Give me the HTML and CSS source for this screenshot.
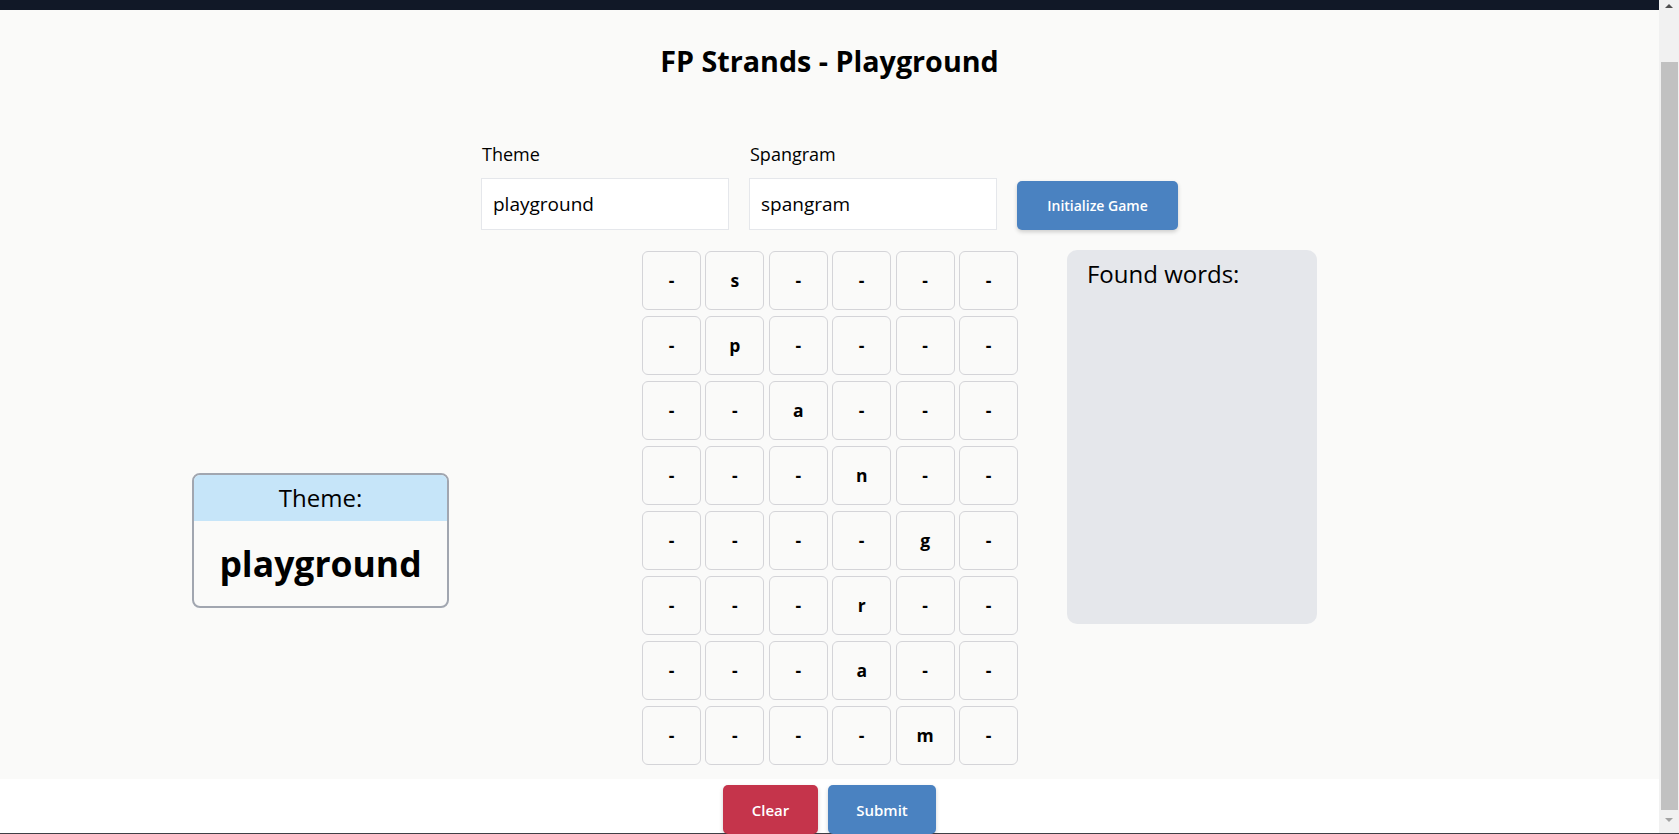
FILE: index.html
```html
<!DOCTYPE html>
<html lang="en">
<head>
<meta charset="utf-8">
<title>FP Strands - Playground</title>
<link rel="stylesheet" href="styles.css">
</head>
<body>
<div class="window">
  <div class="page">
    <div class="topbar"></div>
    <main class="content">
      <h1 class="title">FP Strands - Playground</h1>
      <form class="setup">
        <label class="field">
          <span class="field-label">Theme</span>
          <input class="field-input" type="text" value="playground">
        </label>
        <label class="field">
          <span class="field-label">Spangram</span>
          <input class="field-input" type="text" value="spangram">
        </label>
        <button class="btn btn-blue btn-init" type="button">Initialize Game</button>
      </form>
      <section class="board">
        <div class="theme-card">
          <div class="theme-card-head">Theme:</div>
          <div class="theme-card-body">playground</div>
        </div>
        <div class="letters">
          <div class="cell">-</div><div class="cell">s</div><div class="cell">-</div><div class="cell">-</div><div class="cell">-</div><div class="cell">-</div>
          <div class="cell">-</div><div class="cell">p</div><div class="cell">-</div><div class="cell">-</div><div class="cell">-</div><div class="cell">-</div>
          <div class="cell">-</div><div class="cell">-</div><div class="cell">a</div><div class="cell">-</div><div class="cell">-</div><div class="cell">-</div>
          <div class="cell">-</div><div class="cell">-</div><div class="cell">-</div><div class="cell">n</div><div class="cell">-</div><div class="cell">-</div>
          <div class="cell">-</div><div class="cell">-</div><div class="cell">-</div><div class="cell">-</div><div class="cell">g</div><div class="cell">-</div>
          <div class="cell">-</div><div class="cell">-</div><div class="cell">-</div><div class="cell">r</div><div class="cell">-</div><div class="cell">-</div>
          <div class="cell">-</div><div class="cell">-</div><div class="cell">-</div><div class="cell">a</div><div class="cell">-</div><div class="cell">-</div>
          <div class="cell">-</div><div class="cell">-</div><div class="cell">-</div><div class="cell">-</div><div class="cell">m</div><div class="cell">-</div>
        </div>
        <aside class="found">
          <h2 class="found-title">Found words:</h2>
        </aside>
      </section>
    </main>
    <footer class="actions">
      <button class="btn btn-red btn-clear" type="button">Clear</button>
      <button class="btn btn-blue btn-submit" type="button">Submit</button>
    </footer>
  </div>
  <div class="scrollbar">
    <div class="scroll-arrow scroll-up"></div>
    <div class="scroll-track"><div class="scroll-thumb"></div></div>
    <div class="scroll-arrow scroll-down"></div>
  </div>
</div>
</body>
</html>
```
FILE: styles.css
```css
* { box-sizing: border-box; }

html, body {
  margin: 0;
  padding: 0;
  height: 834px;
  overflow: hidden;
}

body {
  font-family: "Open Sans", "Noto Sans", "Liberation Sans", sans-serif;
  color: #000;
  background: #fafaf9;
}

.window {
  display: flex;
  height: 834px;
  border-bottom: 1px solid #3f3f46;
}

.page {
  flex: 1;
  display: flex;
  flex-direction: column;
  min-width: 0;
}

.topbar {
  height: 10px;
  background: #111827;
}

.content {
  flex: 1;
  background: #fafaf9;
  display: flex;
  flex-direction: column;
}

.title {
  margin: 31px 0 0;
  font-size: 28.7px;
  line-height: 40px;
  font-weight: 700;
  text-align: center;
}

.setup {
  margin: 61px 0 0;
  display: flex;
  justify-content: center;
  align-items: flex-end;
  gap: 20px;
}

.field {
  display: flex;
  flex-direction: column;
  gap: 12px;
}

.field-label {
  font-size: 18px;
  line-height: 24px;
  padding-left: 1px;
}

.field-input {
  width: 248px;
  height: 52px;
  border: 1px solid #e5e7eb;
  background: #fff;
  padding: 0 11px;
  font-family: inherit;
  font-size: 19px;
  color: #000;
  outline: none;
}

.btn {
  border: none;
  color: #fff;
  font-family: inherit;
  font-weight: 600;
  border-radius: 5px;
  box-shadow: 0 2px 4px rgba(0, 0, 0, 0.18);
  cursor: pointer;
}

.btn-blue { background: #4a82c1; }
.btn-red { background: #c5344b; }

.btn-init {
  width: 161px;
  height: 49px;
  font-size: 14px;
}

.board {
  margin-top: 20px;
  display: grid;
  grid-template-columns: 1fr auto 1fr;
  align-items: start;
}

.theme-card {
  justify-self: end;
  margin-right: 192px;
  margin-top: 223px;
  width: 257px;
  border: 2px solid #a1a6b0;
  border-radius: 8px;
  overflow: hidden;
  background: #fafaf9;
}

.theme-card-head {
  height: 46px;
  background: #c6e5f9;
  text-align: center;
  font-size: 24px;
  line-height: 46px;
}

.theme-card-body {
  height: 85px;
  text-align: center;
  font-size: 35.5px;
  font-weight: 700;
  line-height: 85px;
}

.letters {
  display: grid;
  grid-template-columns: repeat(6, 59px);
  grid-auto-rows: 59px;
  column-gap: 4.4px;
  row-gap: 6px;
  padding-top: 0.6px;
  margin-left: 1px;
}

.cell {
  border: 1px solid #d4d4d8;
  border-radius: 6px;
  background: #fafaf9;
  display: flex;
  align-items: center;
  justify-content: center;
  font-size: 17.5px;
  font-weight: 700;
}

.found {
  justify-self: start;
  margin-left: 49px;
  width: 250px;
  height: 374px;
  background: #e5e7eb;
  border-radius: 10px;
  padding: 7px 20px;
}

.found-title {
  margin: 0;
  font-size: 24px;
  line-height: 34px;
  font-weight: 400;
}

.actions {
  height: 54px;
  background: #fff;
  display: flex;
  justify-content: center;
  align-items: flex-start;
  gap: 10px;
  padding-top: 6px;
}

.btn-clear,
.btn-submit {
  height: 49px;
  font-size: 15px;
}

.btn-clear { width: 95px; }
.btn-submit { width: 108px; }

.scrollbar {
  width: 20px;
  background: #f1f1f1;
  display: flex;
  flex-direction: column;
  align-items: center;
}

.scroll-arrow {
  width: 0;
  height: 0;
  border-left: 4px solid transparent;
  border-right: 4px solid transparent;
}

.scroll-up {
  margin-top: 4px;
  border-bottom: 4px solid #505050;
}

.scroll-down {
  margin-bottom: 11px;
  border-top: 4px solid #a3a3a3;
}

.scroll-track {
  flex: 1;
  width: 100%;
  padding: 54px 1px 8px 2px;
  display: flex;
}

.scroll-thumb {
  flex: 1;
  background: #c1c1c1;
}
```
